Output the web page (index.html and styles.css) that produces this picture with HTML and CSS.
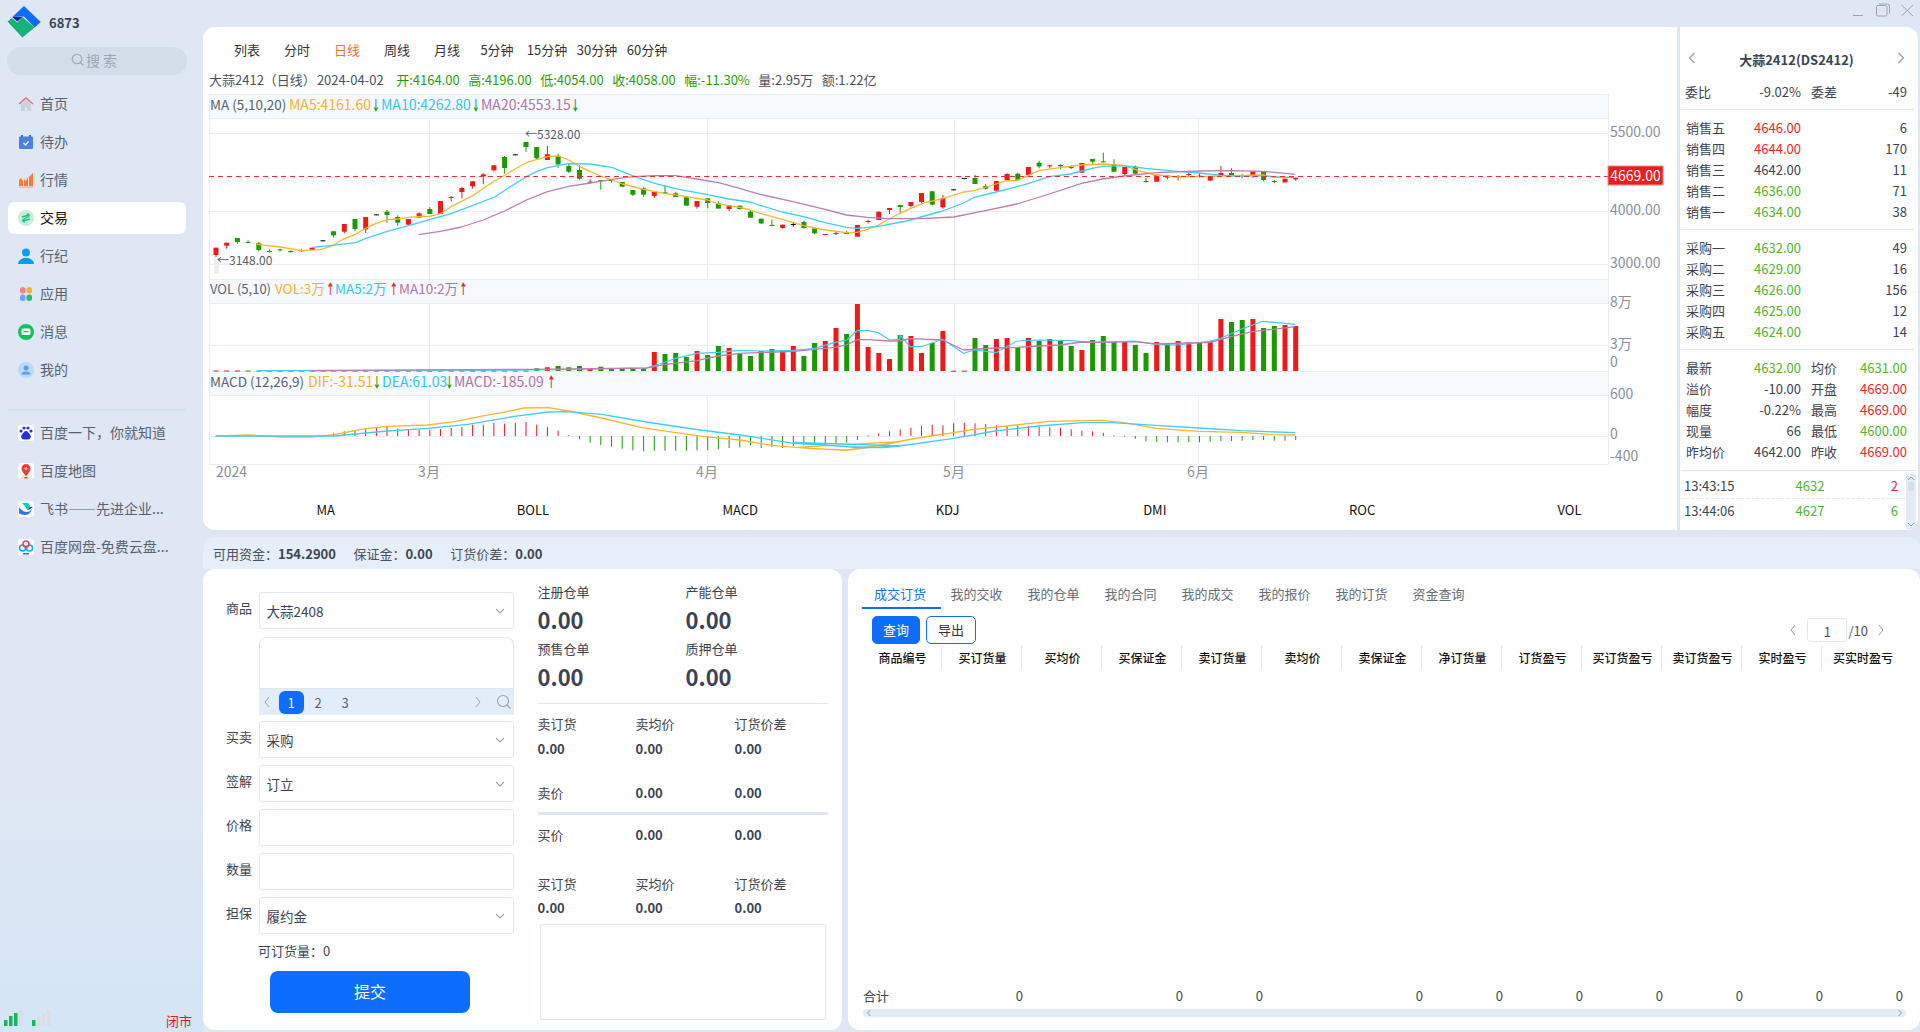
FILE: index.html
```html
<!DOCTYPE html>
<html lang="zh-CN">
<head>
<meta charset="utf-8">
<title>6873</title>
<link rel="stylesheet" href="styles.css">
</head>
<body>
<div class="app">
  <aside class="sidebar">
    <div class="brand">
      <svg class="logo" viewBox="0 0 34 32" width="34" height="32">
        <polygon fill="#0d6efd" points="17,0 33.700,16 27.700,21.500 17,10.500 5.300,11"/>
        <polygon fill="#0a1f9e" points="5.300,11 15.500,11 10.300,15.500"/>
        <polygon fill="#17b27a" points="0.500,15.500 5,12 10.300,16.500 15.300,11 27.700,21.500 15.300,31.500"/>
      </svg>
      <span class="brand-name">6873</span>
    </div>
    <div class="search">
      <svg viewBox="0 0 14 14" width="14" height="14"><circle cx="6" cy="6" r="4.8" fill="none" stroke="#9aa6b6" stroke-width="1.1"/><path d="M9.5 9.5 12.5 12.5" stroke="#9aa6b6" stroke-width="1.1"/></svg>
      <span>搜 索</span>
    </div>
    <nav class="nav">
      <a class="nav-item">
        <svg class="nav-icon" viewBox="0 0 16 16"><path d="M3 8v7h4v-4h2v4h4V8L8 4z" fill="#c7d2de"/><path d="M1 8 8 2l7 6" fill="none" stroke="#f07272" stroke-width="1.6"/></svg>
        <span>首页</span></a>
      <a class="nav-item">
        <svg class="nav-icon" viewBox="0 0 16 16"><rect x="1" y="2.500" width="14" height="12.500" rx="1" fill="#4c80e0"/><rect x="3" y="1" width="2" height="3" fill="#3d6fd0"/><rect x="11" y="1" width="2" height="3" fill="#3d6fd0"/><path d="M5.500 9 7.500 11 10.500 7.500" fill="none" stroke="#fff" stroke-width="1.300"/></svg>
        <span>待办</span></a>
      <a class="nav-item">
        <svg class="nav-icon" viewBox="0 0 16 16"><path d="M1 14V8l2-2 2 3v5zM6 14V7l2 2 2-4v9zM11 14V5l2-2 2-2v13z" fill="#ff7a2e"/><rect x="1" y="14.500" width="14" height="1.500" fill="#fbb593"/></svg>
        <span>行情</span></a>
      <a class="nav-item active">
        <svg class="nav-icon" viewBox="0 0 16 16"><circle cx="8" cy="8" r="8" fill="#c6efe1"/><path d="M4 7 11 5 9 3.500M12 9 5 11 7 12.500M4.500 10 11.500 6" fill="none" stroke="#24c07a" stroke-width="1.400"/></svg>
        <span>交易</span></a>
      <a class="nav-item">
        <svg class="nav-icon" viewBox="0 0 16 16"><circle cx="8" cy="4.500" r="4" fill="#0a9bf5"/><path d="M0 16c0-3 3-5 5.500-6h5c2.500 1 5.500 3 5.500 6z" fill="#0a9bf5"/></svg>
        <span>行纪</span></a>
      <a class="nav-item">
        <svg class="nav-icon" viewBox="0 0 16 16"><rect x="2" y="1" width="5.500" height="6.500" rx="2.500" fill="#ff7d86"/><rect x="8.500" y="1" width="5.500" height="6.500" rx="2.500" fill="#ffb02e"/><rect x="2" y="8.500" width="5.500" height="6.500" rx="2.500" fill="#6fa3ff"/><rect x="8.500" y="8.500" width="5.500" height="6.500" rx="2.500" fill="#1fc46a"/></svg>
        <span>应用</span></a>
      <a class="nav-item">
        <svg class="nav-icon" viewBox="0 0 16 16"><circle cx="8" cy="8" r="8" fill="#0ec35c"/><rect x="3.500" y="4.500" width="9" height="6.500" rx="1.500" fill="#fff"/><rect x="5.500" y="7" width="5" height="1.300" fill="#0ec35c"/></svg>
        <span>消息</span></a>
      <a class="nav-item">
        <svg class="nav-icon" viewBox="0 0 16 16"><circle cx="8" cy="8" r="8" fill="#bcd8fb"/><circle cx="8" cy="6" r="2.500" fill="#5b9cf0"/><path d="M3.500 12.500c0-2 2-3 4.500-3s4.500 1 4.500 3z" fill="#5b9cf0"/></svg>
        <span>我的</span></a>
    </nav>
    <div class="side-rule"></div>
    <nav class="nav">
      <a class="nav-item">
        <svg class="nav-icon mark" viewBox="0 0 16 16"><circle cx="3" cy="6" r="1.600" fill="#2932e1"/><circle cx="6" cy="3" r="1.600" fill="#2932e1"/><circle cx="10" cy="3" r="1.600" fill="#2932e1"/><circle cx="13" cy="6" r="1.600" fill="#2932e1"/><path d="M8 6c-2 0-2.500 2-4 3.500S3 14.500 6 14.500h4c3 0 3.500-3.500 2-5S10 6 8 6z" fill="#2932e1"/></svg>
        <span class="ellip">百度一下，你就知道</span></a>
      <a class="nav-item">
        <svg class="nav-icon mark" viewBox="0 0 16 16"><path d="M2 16h12l-3-4H5z" fill="#dcefc9"/><path d="M8 1a4.500 4.500 0 0 0-4.500 4.500C3.500 8.500 8 13 8 13s4.500-4.500 4.500-7.500A4.500 4.500 0 0 0 8 1z" fill="#f23c3c"/><circle cx="8" cy="5.500" r="1.500" fill="#ffb3b3"/><rect x="6.500" y="14" width="3" height="1.500" fill="#f23c3c"/></svg>
        <span class="ellip">百度地图</span></a>
      <a class="nav-item">
        <svg class="nav-icon mark" viewBox="0 0 16 16"><path d="M1 6c2 3 5 5 8 5 2 0 3-1 5-3-1 3-3 6-7 6-3 0-5-1-6-2z" fill="#3370ff"/><path d="M4 2h6c1 1 2 2 2 4l-3 3C8 6 6 4 4 2z" fill="#00d6b9"/><path d="M9 9l3-3 3 0c-2 1-3 3-6 3z" fill="#133c9a"/></svg>
        <span class="ellip">飞书——先进企业...</span></a>
      <a class="nav-item">
        <svg class="nav-icon mark" viewBox="0 0 16 16"><circle cx="4.500" cy="9" r="3" fill="none" stroke="#06a7ff" stroke-width="1.500"/><circle cx="11.500" cy="9" r="3" fill="none" stroke="#06a7ff" stroke-width="1.500"/><circle cx="8" cy="5" r="3" fill="none" stroke="#ef3d56" stroke-width="1.500"/><rect x="5" y="14" width="6" height="1.500" fill="#3370ff"/></svg>
        <span class="ellip">百度网盘-免费云盘...</span></a>
    </nav>
    <footer class="status">
      <span class="signals">
        <svg viewBox="0 0 19 16" width="19" height="16"><rect x="0" y="10" width="3.500" height="6" fill="#14b85a"/><rect x="5" y="6" width="3.500" height="10" fill="#14b85a"/><rect x="10" y="3" width="3.500" height="13" fill="#14b85a"/><rect x="15" y="0" width="3.500" height="16" fill="#d9dee4"/></svg>
        <svg viewBox="0 0 19 16" width="19" height="16"><rect x="0" y="10" width="3.500" height="6" fill="#14b85a"/><rect x="5" y="6" width="3.500" height="10" fill="#d9dee4"/><rect x="10" y="3" width="3.500" height="13" fill="#d9dee4"/><rect x="15" y="0" width="3.500" height="16" fill="#d9dee4"/></svg>
      </span>
      <span class="market-state">闭市</span>
    </footer>
  </aside>

  <main class="main">
    <div class="win-bar">
      <svg viewBox="0 0 14 14" width="14" height="14"><path d="M1 12.500h10" stroke="#9aa3af" stroke-width="1"/></svg>
      <svg viewBox="0 0 14 14" width="14" height="14"><rect x="0.500" y="2.500" width="10.500" height="10.500" rx="1.500" fill="none" stroke="#9aa3af"/><path d="M3 1h8.500a2 2 0 0 1 2 2v7.500" fill="none" stroke="#9aa3af"/></svg>
      <svg viewBox="0 0 14 14" width="14" height="14"><path d="M1.500 2 13 13M13 2 1.500 13" stroke="#9aa3af" stroke-width="1"/></svg>
    </div>

    <section class="quote-card">
      <div class="chart-col">
        <div class="periods">
          <span class="period">列表</span><span class="period">分时</span><span class="period on">日线</span><span class="period">周线</span><span class="period">月线</span><span class="period">5分钟</span><span class="period">15分钟</span><span class="period">30分钟</span><span class="period">60分钟</span>
        </div>
        <div class="k-info">
          <span>大蒜2412（日线）</span><span class="date">2024-04-02</span>
          <span class="up first">开:4164.00</span><span class="up">高:4196.00</span><span class="up">低:4054.00</span><span class="up">收:4058.00</span><span class="up">幅:-11.30%</span><span>量:2.95万</span><span>额:1.22亿</span>
        </div>
        <svg class="kchart" viewBox="209 94 1468 396" width="1468" height="396">
          <g id="plots"></g>
          <text class="lg" y="110"><tspan class="t-name" x="210">MA (5,10,20)</tspan><tspan class="t-a" x="289">MA5:4161.60</tspan><tspan class="t-b" x="381">MA10:4262.80</tspan><tspan class="t-c" x="481">MA20:4553.15</tspan></text>
          <text class="arw t-g" transform="translate(371.500 110) scale(.62 1)">↓</text>
          <text class="arw t-g" transform="translate(471.500 110) scale(.62 1)">↓</text>
          <text class="arw t-g" transform="translate(571 110) scale(.62 1)">↓</text>
          <text class="lg v" y="294"><tspan class="t-name s" x="210">VOL (5,10)</tspan><tspan class="t-a" x="275">VOL:3万</tspan><tspan class="t-b" x="335">MA5:2万</tspan><tspan class="t-c" x="399">MA10:2万</tspan></text>
          <text class="arw t-r" transform="translate(326 294) scale(.62 1)">↑</text>
          <text class="arw t-r" transform="translate(389.500 294) scale(.62 1)">↑</text>
          <text class="arw t-r" transform="translate(459 294) scale(.62 1)">↑</text>
          <text class="lg" y="387"><tspan class="t-name" x="210">MACD (12,26,9)</tspan><tspan class="t-a" x="308">DIF:-31.51</tspan><tspan class="t-b" x="382">DEA:61.03</tspan><tspan class="t-c" x="454">MACD:-185.09</tspan></text>
          <text class="arw t-g" transform="translate(372.500 387) scale(.62 1)">↓</text>
          <text class="arw t-g" transform="translate(445 387) scale(.62 1)">↓</text>
          <text class="arw t-r" transform="translate(547 387) scale(.62 1)">↑</text>
          <text class="note" x="525" y="139">←5328.00</text>
          <text class="note" x="217" y="265">←3148.00</text>
          <text class="ax" x="1610" y="137">5500.00</text>
          <rect class="tag" x="1608" y="166" width="55" height="19"/>
          <text class="tag-t" x="1635.500" y="180.500">4669.00</text>
          <text class="ax" x="1610" y="215">4000.00</text>
          <text class="ax" x="1610" y="268">3000.00</text>
          <text class="ax" x="1610" y="307">8万</text>
          <text class="ax" x="1610" y="349">3万</text>
          <text class="ax" x="1610" y="367">0</text>
          <text class="ax" x="1610" y="399">600</text>
          <text class="ax" x="1610" y="439">0</text>
          <text class="ax" x="1610" y="461">-400</text>
          <text class="ax" x="216" y="477">2024</text>
          <text class="ax mid" x="429" y="477">3月</text>
          <text class="ax mid" x="707" y="477">4月</text>
          <text class="ax mid" x="954" y="477">5月</text>
          <text class="ax mid" x="1198" y="477">6月</text>
        </svg>
        <div class="ind-tabs"><span>MA</span><span>BOLL</span><span>MACD</span><span>KDJ</span><span>DMI</span><span>ROC</span><span>VOL</span></div>
      </div>

      <div class="book">
        <div class="book-head">
          <svg class="chev" viewBox="0 0 10 14" width="10" height="14"><path d="M7.500 2 2.500 7l5 5" fill="none" stroke="#8f97a3" stroke-width="1.100"/></svg>
          <b>大蒜2412(DS2412)</b>
          <svg class="chev" viewBox="0 0 10 14" width="10" height="14"><path d="M2.500 2l5 5-5 5" fill="none" stroke="#8f97a3" stroke-width="1.100"/></svg>
        </div>
        <div class="b-row"><span>委比</span><span class="n">-9.02%</span><i></i><span>委差</span><span class="n">-49</span></div>
        <div class="b-sec">
          <div class="b-row"><span class="wide">销售五</span><span class="n red">4646.00</span><i></i><i></i><span class="n">6</span></div>
          <div class="b-row"><span class="wide">销售四</span><span class="n red">4644.00</span><i></i><i></i><span class="n">170</span></div>
          <div class="b-row"><span class="wide">销售三</span><span class="n">4642.00</span><i></i><i></i><span class="n">11</span></div>
          <div class="b-row"><span class="wide">销售二</span><span class="n grn">4636.00</span><i></i><i></i><span class="n">71</span></div>
          <div class="b-row"><span class="wide">销售一</span><span class="n grn">4634.00</span><i></i><i></i><span class="n">38</span></div>
        </div>
        <div class="b-sec">
          <div class="b-row"><span class="wide">采购一</span><span class="n grn">4632.00</span><i></i><i></i><span class="n">49</span></div>
          <div class="b-row"><span class="wide">采购二</span><span class="n grn">4629.00</span><i></i><i></i><span class="n">16</span></div>
          <div class="b-row"><span class="wide">采购三</span><span class="n grn">4626.00</span><i></i><i></i><span class="n">156</span></div>
          <div class="b-row"><span class="wide">采购四</span><span class="n grn">4625.00</span><i></i><i></i><span class="n">12</span></div>
          <div class="b-row"><span class="wide">采购五</span><span class="n grn">4624.00</span><i></i><i></i><span class="n">14</span></div>
        </div>
        <div class="b-sec">
          <div class="b-row"><span>最新</span><span class="n grn">4632.00</span><i></i><span>均价</span><span class="n grn">4631.00</span></div>
          <div class="b-row"><span>溢价</span><span class="n">-10.00</span><i></i><span>开盘</span><span class="n red">4669.00</span></div>
          <div class="b-row"><span>幅度</span><span class="n">-0.22%</span><i></i><span>最高</span><span class="n red">4669.00</span></div>
          <div class="b-row"><span>现量</span><span class="n">66</span><i></i><span>最低</span><span class="n grn">4600.00</span></div>
          <div class="b-row"><span class="wide">昨均价</span><span class="n">4642.00</span><i></i><span>昨收</span><span class="n red">4669.00</span></div>
        </div>
        <div class="ticks">
          <div class="tick-list">
            <div class="tick"><span>13:43:15</span><span class="grn c">4632</span><span class="red r">2</span></div>
            <div class="tick"><span>13:44:06</span><span class="grn c">4627</span><span class="grn r">6</span></div>
          </div>
          <div class="vscroll">
            <svg viewBox="0 0 10 8" width="10" height="8"><path d="M2 6l3-3 3 3" fill="none" stroke="#8f97a3"/></svg>
            <i class="thumb"></i>
            <svg viewBox="0 0 10 8" width="10" height="8"><path d="M2 2l3 3 3-3" fill="none" stroke="#8f97a3"/></svg>
          </div>
        </div>
      </div>
    </section>

    <div class="funds"><span>可用资金：<b>154.2900</b></span><span>保证金：<b>0.00</b></span><span>订货价差：<b>0.00</b></span></div>

    <div class="panels">
      <section class="order">
        <form class="form">
          <div class="f-row"><label>商品</label><div class="sel"><span>大蒜2408</span><svg viewBox="0 0 10 6" width="10" height="6"><path d="M1 1l4 4 4-4" fill="none" stroke="#9aa3af" stroke-width="1.100"/></svg></div></div>
          <div class="picker">
            <div class="picker-list"></div>
            <div class="pager">
              <svg viewBox="0 0 8 12" width="8" height="12"><path d="M6 1 2 6l4 5" fill="none" stroke="#9aa3af"/></svg>
              <span class="pg on">1</span><span class="pg">2</span><span class="pg">3</span>
              <svg class="pg-next" viewBox="0 0 8 12" width="8" height="12"><path d="M2 1l4 5-4 5" fill="none" stroke="#9aa3af"/></svg>
              <svg viewBox="0 0 16 16" width="16" height="16"><circle cx="7" cy="7" r="5.500" fill="none" stroke="#9aa3af" stroke-width="1.200"/><path d="M11 11l3.500 3.500" stroke="#9aa3af" stroke-width="1.200"/></svg>
            </div>
          </div>
          <div class="f-row"><label>买卖</label><div class="sel"><span>采购</span><svg viewBox="0 0 10 6" width="10" height="6"><path d="M1 1l4 4 4-4" fill="none" stroke="#9aa3af" stroke-width="1.100"/></svg></div></div>
          <div class="f-row"><label>签解</label><div class="sel"><span>订立</span><svg viewBox="0 0 10 6" width="10" height="6"><path d="M1 1l4 4 4-4" fill="none" stroke="#9aa3af" stroke-width="1.100"/></svg></div></div>
          <div class="f-row"><label>价格</label><div class="sel"></div></div>
          <div class="f-row"><label>数量</label><div class="sel"></div></div>
          <div class="f-row"><label>担保</label><div class="sel"><span>履约金</span><svg viewBox="0 0 10 6" width="10" height="6"><path d="M1 1l4 4 4-4" fill="none" stroke="#9aa3af" stroke-width="1.100"/></svg></div></div>
          <div class="avail">可订货量：0</div>
          <div class="submit">提交</div>
        </form>
        <div class="stats">
          <div class="stat-grid">
            <div><span>注册仓单</span><b>0.00</b></div>
            <div><span>产能仓单</span><b>0.00</b></div>
            <div><span>预售仓单</span><b>0.00</b></div>
            <div><span>质押仓单</span><b>0.00</b></div>
          </div>
          <div class="s-rule"></div>
          <div class="tri top"><span>卖订货</span><span>卖均价</span><span>订货价差</span><b>0.00</b><b>0.00</b><b>0.00</b></div>
          <div class="tri price sell"><span>卖价</span><b>0.00</b><b>0.00</b></div>
          <div class="s-rule thick"></div>
          <div class="tri price"><span>买价</span><b>0.00</b><b>0.00</b></div>
          <div class="tri top bottom"><span>买订货</span><span>买均价</span><span>订货价差</span><b>0.00</b><b>0.00</b><b>0.00</b></div>
          <div class="memo"></div>
        </div>
      </section>

      <section class="records">
        <div class="tabs">
          <span class="tab on">成交订货</span><span class="tab">我的交收</span><span class="tab">我的仓单</span><span class="tab">我的合同</span><span class="tab">我的成交</span><span class="tab">我的报价</span><span class="tab">我的订货</span><span class="tab">资金查询</span>
        </div>
        <div class="tools">
          <span class="btn primary">查询</span><span class="btn ghost">导出</span>
          <div class="paging">
            <svg viewBox="0 0 8 12" width="8" height="12"><path d="M6 1 2 6l4 5" fill="none" stroke="#8f97a3"/></svg>
            <span class="page-box">1</span><span>/10</span>
            <svg viewBox="0 0 8 12" width="8" height="12"><path d="M2 1l4 5-4 5" fill="none" stroke="#8f97a3"/></svg>
          </div>
        </div>
        <div class="t-head"><span>商品编号</span><span>买订货量</span><span>买均价</span><span>买保证金</span><span>卖订货量</span><span>卖均价</span><span>卖保证金</span><span>净订货量</span><span>订货盈亏</span><span>买订货盈亏</span><span>卖订货盈亏</span><span>实时盈亏</span><span>买实时盈亏</span></div>
        <div class="t-body"></div>
        <div class="t-sum"><span class="first">合计</span><span>0</span><span></span><span>0</span><span>0</span><span></span><span>0</span><span>0</span><span>0</span><span>0</span><span>0</span><span>0</span><span>0</span></div>
        <div class="hscroll">
          <svg viewBox="0 0 8 8" width="8" height="8"><path d="M5.500 1 2.500 4l3 3" fill="none" stroke="#8f97a3"/></svg>
          <svg viewBox="0 0 8 8" width="8" height="8"><path d="M2.500 1l3 3-3 3" fill="none" stroke="#8f97a3"/></svg>
        </div>
      </section>
    </div>
  </main>
</div>
<script src="chart.js"></script>
</body>
</html>
```

FILE: styles.css
```css
* { box-sizing: border-box; }
html, body { margin: 0; padding: 0; height: 100%; }
body {
  font-family: "Noto Sans CJK SC", "Noto Sans", sans-serif;
  font-size: 13px;
  color: #3c4353;
  background: #dfe7f4;
  overflow: hidden;
}
.app { display: flex; width: 1920px; height: 1032px; }

/* sidebar */
.sidebar {
  width: 203px;
  flex: none;
  padding: 6px 17px 0 8px;
  display: flex;
  flex-direction: column;
  background: linear-gradient(to bottom, #dfe7f4 0, #dfe7f4 78%, #d4e5f5 100%);
}
.brand { display: flex; align-items: flex-start; height: 36px; margin-left: -1px; }
.logo { flex: none; }
.brand-name { margin: 7px 0 0 8px; font-weight: 700; font-size: 13px; line-height: 20px; color: #3b4254; }
.search {
  margin: 5px 0 0 -1px;
  height: 28px;
  padding-bottom: 2px;
  border-radius: 14px;
  background: #d3ddea;
  color: #9aa6b6;
  width: 180px;
  display: flex;
  align-items: center;
  justify-content: center;
  gap: 1px;
  font-size: 14px;
}
.search svg { margin-left: -6px; }
.nav { margin-top: 13px; display: flex; flex-direction: column; gap: 6px; }
.nav-item {
  height: 32px;
  border-radius: 6px;
  display: flex;
  align-items: center;
  padding-left: 10px;
  color: #596070;
  font-size: 14px;
  width: 178px;
  white-space: nowrap;
}
.nav-item span { margin-top: -2px; }
.nav-item.active { background: #fff; color: #111; }
.nav-icon { width: 16px; height: 16px; flex: none; margin-right: 6px; }
.nav-icon.mark { background: #fff; border-radius: 3px; }
.side-rule { height: 2px; background: #d6e0ed; width: 178px; margin: 23px 0 -7px; }
.status {
  margin: auto -6px 6px -4px;
  display: flex;
  justify-content: space-between;
  align-items: flex-end;
  height: 22px;
}
.signals { display: flex; gap: 9px; height: 16px; }
.market-state { color: #f01414; font-size: 13px; line-height: 20px; margin-bottom: -5px; }

/* main column */
.main { flex: 1; min-width: 0; display: flex; flex-direction: column; }
.win-bar {
  height: 27px;
  display: flex;
  justify-content: flex-end;
  align-items: flex-start;
  gap: 10px;
  padding: 3px 6px 0 0;
  flex: none;
}
.quote-card {
  height: 503px;
  margin-right: 2px;
  background: #fff;
  border-radius: 12px;
  display: flex;
  overflow: hidden;
  flex: none;
}
.chart-col { width: 1474px; flex: none; padding-left: 6px; }
.periods { height: 45px; display: flex; align-items: center; padding-left: 13px; color: #333; }
.period { width: 50px; text-align: center; white-space: nowrap; }
.period.on { color: #f5722a; }
.k-info { height: 16px; margin-top: -1px; margin-bottom: 7px; display: flex; align-items: center; gap: 8.500px; white-space: nowrap; color: #4a5160; font-size: 13px; }
.k-info .date { margin-left: -7.500px; }
.k-info .first { margin-left: 4px; }
.k-info .up { color: #1f9e0c; }
.kchart { display: block; }
.kchart text { font-family: "Noto Sans CJK SC", "Noto Sans", sans-serif; }
.lg { font-size: 14px; }
.lg.v { font-size: 13.500px; }
.t-name { fill: #5a6170; font-size: 13.500px; }
.t-name.s { font-size: 13px; }
.t-a { fill: #ffb028; }
.t-b { fill: #2ec8fa; }
.t-c { fill: #b970aa; }
.t-g { fill: #1a9a00; }
.t-r { fill: #eb1c1c; }
.arw { font-size: 14px; font-weight: 700; }
.note { font-size: 12px; fill: #555c6a; }
.ax { font-size: 14px; fill: #8a8f96; }
.ax.mid { text-anchor: middle; }
.tag { fill: #eb1c1c; stroke: #f28a8a; stroke-width: 1; }
.tag-t { font-size: 14px; fill: #fff; text-anchor: middle; }
.ind-tabs {
  height: 38px;
  display: grid;
  grid-template-columns: repeat(7, 207.300px);
  margin-left: 13px;
  align-items: center;
  text-align: center;
  color: #111;
}

/* order book */
.book { flex: 1; border-left: 3px solid #dfe7f4; padding-top: 12px; }
.book-head {
  height: 42px;
  display: flex;
  align-items: flex-start;
  justify-content: space-between;
  padding: 11px 13px 0 7px;
  color: #3c4353;
}
.chev { flex: none; margin-top: 1px; }
.b-row {
  display: grid;
  grid-template-columns: 48px 68px 10px 40px 56px;
  height: 21px;
  line-height: 21px;
  padding-left: 5px;
  white-space: nowrap;
}
.b-row .n { text-align: right; }
.b-row .wide { width: 48px; overflow: visible; }
.red { color: #fb1e1e; }
.grn { color: #4fb52b; }
.b-sec {
  margin: 7px 5px 0 1px;
  border-top: 1px solid #dfe7f4;
  padding-top: 7px;
}
.b-sec .b-row { margin-right: -5px; padding-left: 5px; grid-template-columns: 47px 68px 10px 40px 56px; }
.ticks {
  margin: 8px 3px 0 1px;
  border-top: 1px solid #dfe7f4;
  display: flex;
  padding-top: 3px;
  height: 60px;
}
.tick-list { width: 224px; }
.tick {
  display: grid;
  grid-template-columns: 82px 88px 1fr;
  height: 25px;
  line-height: 24px;
  padding: 0 7px 0 3px;
  border-bottom: 1px dashed #dfe7f4;
}
.tick:last-child { border-bottom: 0; }
.tick .c { text-align: center; }
.tick .r { text-align: right; }
.vscroll {
  width: 10px;
  margin-left: 1px;
  height: 55px;
  background: #e3ebf6;
  display: flex;
  flex-direction: column;
  align-items: center;
  justify-content: space-between;
}
.vscroll .thumb { width: 6px; height: 9px; background: #d5dfec; margin-bottom: 28px; border-radius: 2px; margin-top: -3px; }

/* funds strip */
.funds {
  margin-top: 7px;
  height: 32px;
  background: #e5eef9;
  border-radius: 12px 12px 0 0;
  display: flex;
  align-items: center;
  gap: 17.500px;
  padding-left: 10px;
  color: #4a5160;
  flex: none;
}
.funds b { color: #3c4353; }

/* panels */
.panels { display: flex; gap: 6px; height: 461px; flex: none; }
.order {
  width: 639px;
  background: #fff;
  border-radius: 12px;
  display: flex;
  padding: 23px 0 0 23px;
  flex: none;
}
.form { width: 287.500px; flex: none; }
.f-row { display: flex; align-items: center; height: 37px; margin-bottom: 7px; }
.f-row label { width: 26px; margin-right: 6.500px; margin-top: -7px; flex: none; white-space: nowrap; }
.sel {
  width: 255px;
  height: 37px;
  border: 1px solid #e2e8f3;
  border-radius: 3px;
  display: flex;
  justify-content: space-between;
  align-items: center;
  padding: 0 8px 0 7px;
  font-size: 13.500px;
}
.form > .f-row:first-child { margin-bottom: 8px; }
.picker { margin: 0 0 6px 32.500px; width: 255px; }
.picker-list { height: 52px; border: 1px solid #e2e8f3; border-bottom: 1px solid #dfe7f4; border-radius: 8px 8px 0 0; }
.pager { height: 26px; background: #e3edf9; display: flex; align-items: center; padding: 0 2px 0 4px; }
.pg { width: 25px; margin: 0 1px; text-align: center; color: #5a6170; font-size: 13px; }
.pg:first-of-type { margin-left: 8px; }
.pg.on { height: 23px; line-height: 23px; background: #0d6efd; color: #fff; border-radius: 6px; }
.pg-next { margin-left: auto; margin-right: 14px; }
.avail { margin: 7px 0 0 32px; line-height: 20px; color: #3c4353; }
.submit {
  margin: 10px 0 0 44px;
  width: 200px;
  height: 42px;
  line-height: 40px;
  border-radius: 8px;
  background: #0d6efd;
  color: #fff;
  font-size: 16px;
  text-align: center;
}
.stats { width: 290px; margin: -10px 0 0 24px; flex: none; }
.stat-grid { display: grid; grid-template-columns: 148px 142px; }
.stat-grid span { display: block; line-height: 20px; }
.stat-grid b { display: block; line-height: 35px; margin-bottom: 2px; font-size: 22px; color: #3c4353; }
.s-rule { height: 1px; background: #dfe7f4; margin-top: 7px; }
.s-rule.thick { height: 3px; margin-top: 9px; }
.tri { display: grid; grid-template-columns: 98px 99px 1fr; line-height: 20px; }
.tri b { color: #3c4353; font-size: 13px; }
.tri.top { margin-top: 10px; row-gap: 5px; }
.tri.price { margin-top: 10px; }
.tri.sell { margin-top: 24px; }
.tri.bottom { margin-top: 29px; row-gap: 4px; }
.memo { margin: 6px 0 0 2px; width: 286px; height: 96px; border: 1px solid #e2e8f3; border-bottom-color: #d5dfec; border-radius: 2px; }

.records {
  flex: 1;
  min-width: 0;
  background: #fff;
  border-radius: 12px;
  padding: 11px 0 0 14px;
  display: flex;
  flex-direction: column;
}
.tabs { display: flex; height: 29px; flex: none; }
.tab { padding: 0 12.500px; line-height: 28px; color: #666c78; white-space: nowrap; }
.tab.on { color: #0d6efd; border-bottom: 2px solid #0d6efd; padding: 0 15px 0 12px; margin-right: -3px; }
.tools { display: flex; align-items: center; height: 28px; margin: 7px 0 0 10px; gap: 6px; flex: none; }
.btn { height: 28px; line-height: 26px; border-radius: 5px; text-align: center; border: 1px solid #0d6efd; }
.btn.primary { width: 48px; background: #0d6efd; color: #fff; }
.btn.ghost { width: 50px; background: #fff; color: #333; }
.paging { margin-left: auto; margin-right: 35px; display: flex; align-items: center; gap: 1px; color: #4a5160; }
.page-box { width: 40px; height: 24px; line-height: 26px; text-align: center; border: 1px solid #e2e8f3; border-radius: 3px; margin-left: 9px; }
.paging svg:last-child { margin-left: 8px; }
.t-head, .t-sum { display: grid; grid-template-columns: repeat(13, 80px); flex: none; }
.t-head { margin-top: 2px; height: 24px; }
.t-head span {
  border-right: 1px solid #e4e7ec;
  text-align: center;
  padding-left: 2px;
  font-size: 12px;
  font-weight: 500;
  color: #111;
  line-height: 24px;
  white-space: nowrap;
}
.t-head span:last-child { border-right: 0; }
.t-body { flex: 1; }
.t-sum { height: 20px; line-height: 20px; margin-left: 1px; }
.t-sum span { text-align: right; }
.t-sum .first { text-align: left; }
.hscroll {
  flex: none;
  margin: 3px 14px 13px 1px;
  height: 8px;
  background: #e3ebf6;
  border-radius: 4px;
  display: flex;
  justify-content: space-between;
  padding: 0 2px;
}
```

FILE: chart.js
```js
(function () {
  var RED = '#ee1a1a', GREEN = '#1a9a00', BLACK = '#111', GRID = '#e6edf4';
  var X = function (i) { return 216 + 10.69 * i; };
  var y3 = function (v) { return 60 + v / 3; };
  var y4 = function (v) { return 100 + v / 3; };
  var x3 = function (v) { return 200 + v / 2.8; };
  var x4 = function (v) { return 760 + v / 1.704; };
  var y5 = function (v) { return 270 + v / 3; };
  var x5 = function (v) { return 200 + v / 2.24; };

  // [colour, wick top, body top, body bottom, wick bottom]
  var a = [
    'r,563,563,585,590','r,548,548,557,566','g,534,534,546,551','g,541,546,548,549','g,546,550,570,574',
    'g,568,573,575,578','g,566,568,570,574','g,571,573,575,578','r,568,571,572,575','r,563,563,570,570',
    'k,541,541,542,542','g,514,514,526,533','r,492,492,515,520','g,477,477,507,512','r,471,471,508,519',
    'k,463,463,464,464','g,450,455,465,488','g,466,471,488,497','r,477,477,494,494','r,457,460,473,473',
    'g,441,447,462,462','r,423,423,462,462','r,408,411,412,424','r,380,384,396,415','r,364,364,379,386',
    'r,340,343,349,373','r,316,316,331,335','g,288,291,324,341','k,283,283,284,284','g,246,246,261,275',
    'g,261,261,295,298','r,258,283,300,300','g,281,287,313,323','g,312,318,335,339','g,316,330,356,359',
    'r,358,365,366,372','g,360,360,363,389','g,358,360,362,368','g,366,366,380,382','g,390,390,404,408',
    'g,380,385,404,410','r,396,396,408,414','g,375,397,398,401','g,395,400,411,411','g,412,412,437,437',
    'r,423,423,440,446','g,415,415,429,445','g,424,430,446,446','r,435,435,447,453','g,437,437,447,449',
    'g,450,455,473,473'
  ];
  var b = [
    'g,356,356,370,372','g,358,375,377,379','r,374,374,384,386','k,367,372,374,380','g,362,366,384,386',
    'g,385,385,400,403','r,402,402,403,403','r,396,399,401,405','g,392,398,402,402','r,375,375,410,410',
    'r,359,363,365,370','r,335,335,360,360','r,324,324,330,342','g,315,315,321,338','r,306,306,318,322',
    'r,279,279,306,313','g,274,274,314,316','r,285,294,322,326','k,268,268,269,269','k,234,234,235,235',
    'g,224,234,252,252','g,252,258,266,269','r,243,243,272,272','r,220,222,240,240','g,218,221,239,241',
    'r,201,201,225,225','g,182,188,199,205','r,194,196,197,205','g,193,195,199,208','g,196,200,204,207',
    'r,189,189,218,218','g,177,177,185,192','g,158,184,187,187','g,178,192,215,215','r,201,201,222,229',
    'g,197,200,221,225','g,233,243,246,248','r,224,224,245,245','g,226,226,233,238','g,225,229,230,242',
    'r,215,222,224,230','g,220,227,228,232','r,229,229,242,242','r,198,219,226,226','g,205,219,228,230',
    'g,222,226,227,234','r,214,214,228,234','g,214,214,240,244','g,240,243,245,250','r,236,236,247,247',
    'r,233,233,238,242'
  ];

  function colorOf(c) { return c === 'r' ? RED : c === 'g' ? GREEN : BLACK; }
  var out = [];
  function rect(x, y, w, h, f) { out.push('<rect x="' + x.toFixed(1) + '" y="' + y.toFixed(1) + '" width="' + w + '" height="' + Math.max(h, 1).toFixed(1) + '" fill="' + f + '"/>'); }
  function hline(y, x1, x2, c) { rect(x1, y, x2 - x1, 1, c || GRID); }
  function vline(x, y1, y2) { rect(x, y1, 1, y2 - y1, GRID); }
  function poly(pts, c, w) { out.push('<polyline fill="none" stroke-linejoin="round" stroke="' + c + '" stroke-width="' + (w || 1.3) + '" points="' + pts.join(' ') + '"/>'); }
  function map(list, fx, fy) { var r = []; for (var i = 0; i < list.length; i += 2) r.push(fx(list[i]).toFixed(1) + ',' + fy(list[i + 1]).toFixed(1)); return r; }

  // frames
  rect(209, 94, 1399, 24, '#f6fafd');
  rect(209, 279, 1399, 24, '#f6fafd');
  rect(209, 371, 1399, 24, '#f6fafd');
  [94, 118, 133, 211, 264, 279, 303, 345, 371, 395, 436, 464].forEach(function (y) { hline(y, 209, 1608); });
  vline(209, 94, 465); vline(1608, 94, 465);
  [429, 707, 954, 1198].forEach(function (x) {
    vline(x, 118, 279); vline(x, 303, 371); vline(x, 395, 464);
  });
  out.push('<rect x="214" y="255" width="5" height="19" fill="#eeeeee"/>');

  // candles
  function candle(i, s, fy) {
    var p = s.split(','), c = colorOf(p[0]), cx = X(i);
    rect(cx - 0.5, fy(+p[1]), 1, fy(+p[4]) - fy(+p[1]), c);
    rect(cx - 2.5, fy(+p[2]), 5, fy(+p[3]) - fy(+p[2]), c);
  }
  a.forEach(function (s, i) { candle(i, s, y3); });
  b.forEach(function (s, i) { candle(i + 51, s, y4); });

  // price moving averages
  var O = '#ffb42e', C = '#3fcdfb', P = '#bd7db0';
  poly(map([160,553,225,561,285,572,340,568,375,555,400,538,435,523,463,505,493,490,524,479,553,477,584,472,615,469,643,469,673,461,703,440,732,424,762,408,793,385,825,363,853,346,881,328,914,308,942,299,973,290,1004,288,1032,300,1063,320,1093,335,1122,348,1153,360,1183,372,1242,388,1301,400,1362,410,1421,420,1452,432,1511,442,1541,450,1568,460], x3, y3)
    .concat(map([38,358,74,377,111,390,147,398,165,397,183,388,201,376,238,340,275,311,311,296,347,276,365,272,402,252,420,242,438,242,475,212,511,203,548,195,584,192,620,196,650,215,675,225,711,231,748,230,785,228,820,226,857,225,875,232,912,233], x4, y4)), O);
  poly(map([315,562,370,556,435,548,463,536,524,514,584,497,643,479,703,461,762,437,825,411,881,372,914,350,942,335,973,323,1004,316,1032,311,1093,312,1153,322,1211,347,1273,370,1331,386,1421,404,1480,417,1541,426,1568,436], x3, y3)
    .concat(map([38,336,74,350,111,368,147,382,165,385,201,379,250,363,311,333,347,309,365,292,402,276,457,251,493,230,529,222,566,205,584,199,620,197,657,205,711,214,748,219,785,226,820,229,857,227,875,230,912,232], x4, y4)), C);
  poly(map([612,524,673,514,732,501,793,480,853,453,914,420,973,395,1032,379,1093,369,1153,358,1211,350,1273,347,1331,347,1390,357,1452,368,1511,385,1568,403], x3, y3)
    .concat(map([56,305,111,328,147,345,183,352,220,356,275,356,330,351,384,332,438,312,493,282,548,250,584,237,620,228,675,218,748,213,802,212,857,214,912,223], x4, y4)), P);

  // current price dashed line
  out.push('<line x1="209" x2="1608" y1="176.5" y2="176.5" stroke="#f03030" stroke-width="1" stroke-dasharray="5 4"/>');

  // volume bars
  var vol = 'g295,r292,g288,g292,g288,r294,g290,g295,g295,g295,g294,r246,g252,g249,g261,r243,g255,g228,r234,g252,g258,g243,g237,r240,r228,g258,g219,r213,r174,g192,r102,r231,r249,r267,g195,r198,r249,g219,r183,r302,r302,g204,g225,r207,r204,g232,r204,g212,r207,g213,g228,r240,g210,g198,g216,r216,g225,g249,r216,g219,r213,r217,g216,r213,r147,g156,g150,r147,g174,g168,r165,r168'.split(',');
  for (var i = 0; i < 102; i++) {
    if (i < 30) {
      var ca = (i < 3 || i === 8 || i === 9) ? RED : (i > 12 && i % 2 === 0 ? RED : GREEN);
      rect(X(i) - 2.5, 370.5, 5, 1, ca);
    } else {
      var s = vol[i - 30], top = 270 + (+s.slice(1)) / 3;
      rect(X(i) - 2.5, top, 5, 371 - top, colorOf(s[0]));
    }
  }
  poly(map([130,302,750,300,1000,294,1030,282,1066,265,1113,250,1160,247,1209,241,1258,243,1330,241,1377,235,1423,217,1449,210,1473,181,1497,182,1520,188,1545,210,1568,208], x5, y5)
    .concat(map([238,195,256,230,275,230,311,208,347,250,365,240,402,248,438,213,475,210,530,212,566,217,638,213,675,223,711,225,748,218,766,214,785,205,820,178,857,154,912,163], x4, y5)), C, 1.2);
  poly(map([250,302,750,298,1000,294,1040,284,1113,272,1160,258,1209,250,1330,244,1377,238,1423,232,1449,224,1473,209,1497,209,1545,213,1568,213], x5, y5)
    .concat(map([256,206,311,210,347,240,402,234,438,232,475,228,511,225,548,216,584,217,638,215,675,222,748,218,766,218,802,200,839,185,875,178,912,170], x4, y5)), P, 1.3);

  // MACD columns
  var m = [1,2,3,3,1,1,0,-2,-2,-3,-3,8,14,17,23,26,28,22,18,18,18,21,24,27,34,34,39,37,39,42,34,27,16,3,-10,-20,-27,-32,-38,-43,-46,-44,-44,-44,-44,-43,-42,-40,-36,-34,-28,-36,-33,-36,-30,-28,-26,-28,-24,-20,-12,2,8,14,20,25,30,34,32,38,40,38,36,32,30,32,30,28,26,24,20,16,14,10,2,1,-8,-16,-18,-19,-19,-19,-19,-17,-15,-15,-14,-12,-12,-14,-14,-12];
  var zero = 436;
  m.forEach(function (h, i) {
    if (!h) return;
    var px = h / 3;
    if (h > 0) rect(X(i) - 0.5, zero - px, 1, px, RED);
    else rect(X(i) - 0.5, zero, 1, -px, GREEN);
  });
  poly(map([36,498,110,495,180,501,250,501,300,494,370,476,420,469,510,465,570,455,640,436,680,427,725,414,780,413,825,423,900,444,990,473,1050,485,1130,500,1210,510,1280,526,1370,536,1450,540,1530,525,1568,515], x5, y5)
    .concat(map([60,532,147,541,183,533,250,510,290,498,330,488,365,478,420,468,493,454,584,451,620,458,675,475,748,484,820,487,875,494,912,495], x4, y5)), O);
  poly(map([36,498,300,498,420,483,510,475,600,463,700,440,780,426,825,425,900,433,1000,456,1120,480,1210,495,1330,520,1450,530,1530,533,1568,528], x5, y5)
    .concat(map([60,517,165,533,200,532,250,525,330,505,400,483,475,468,550,458,600,458,675,466,748,474,820,482,912,488], x4, y5)), C);

  document.getElementById('plots').innerHTML = out.join('');
})();
```
